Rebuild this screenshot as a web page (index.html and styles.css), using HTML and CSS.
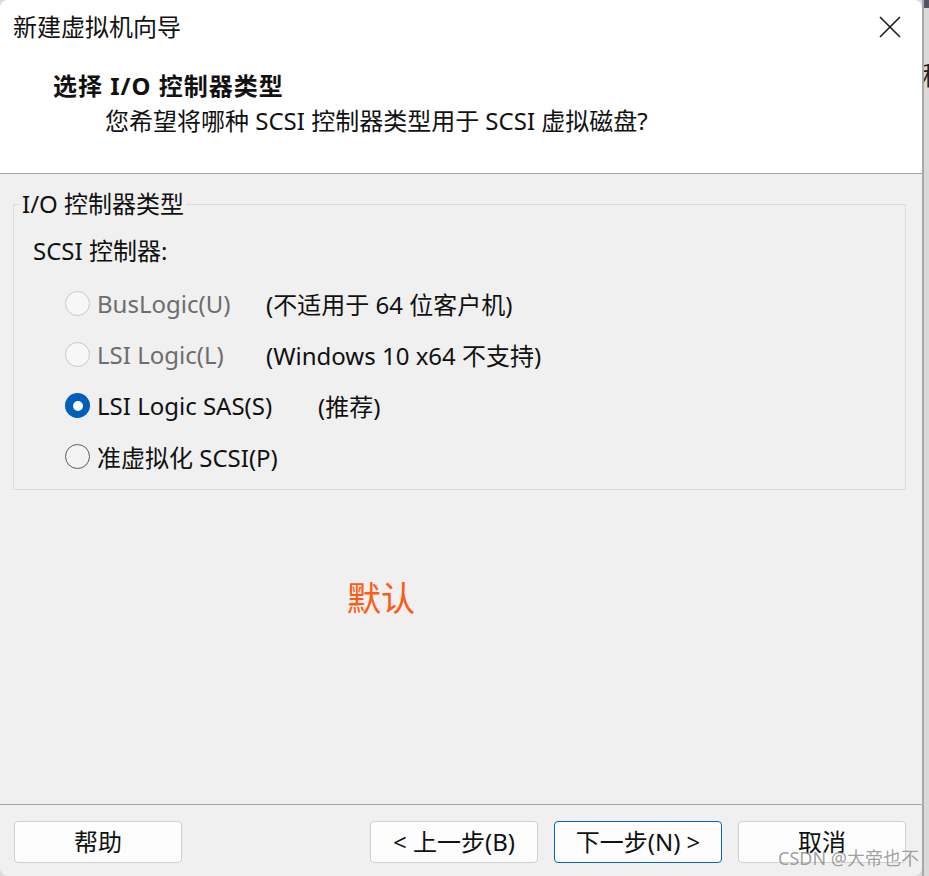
FILE: index.html
```html
<!DOCTYPE html>
<html lang="zh-CN">
<head>
<meta charset="utf-8">
<title>新建虚拟机向导</title>
<link rel="stylesheet" href="styles.css">
</head>
<body>
<div class="desktop">
  <div class="window">
    <div class="header">
      <div class="titlebar">
        <div class="title">新建虚拟机向导</div>
        <svg class="close" width="22" height="22" viewBox="0 0 22 22"><path d="M1 1 L21 21 M21 1 L1 21" stroke="#1a1a1a" stroke-width="1.6" fill="none"/></svg>
      </div>
      <div class="heading">选择 I/O 控制器类型</div>
      <div class="subtitle">您希望将哪种 SCSI 控制器类型用于 SCSI 虚拟磁盘?</div>
    </div>
    <div class="content">
      <fieldset class="group">
        <legend class="group-label">I/O 控制器类型</legend>
        <div class="group-caption">SCSI 控制器:</div>
        <div class="row disabled">
          <span class="radio"></span>
          <span class="label">BusLogic(U)</span>
          <span class="note">(不适用于 64 位客户机)</span>
        </div>
        <div class="row disabled">
          <span class="radio"></span>
          <span class="label">LSI Logic(L)</span>
          <span class="note">(Windows 10 x64 不支持)</span>
        </div>
        <div class="row">
          <span class="radio checked"></span>
          <span class="label wide">LSI Logic SAS(S)</span>
          <span class="note">(推荐)</span>
        </div>
        <div class="row">
          <span class="radio"></span>
          <span class="label">准虚拟化 SCSI(P)</span>
        </div>
      </fieldset>
      <div class="annotation">默认</div>
    </div>
    <div class="footer">
      <button class="btn">帮助</button>
      <div class="spacer"></div>
      <button class="btn">&lt; 上一步(B)</button>
      <button class="btn primary">下一步(N) &gt;</button>
      <button class="btn">取消</button>
    </div>
    <div class="watermark">CSDN @大帝也不</div>
  </div>
  <div class="behind">
    <div class="behind-top"></div>
    <div class="behind-char">种</div>
  </div>
</div>
</body>
</html>
```
FILE: styles.css
```css
html, body {
  margin: 0;
  padding: 0;
}
body {
  width: 929px;
  height: 876px;
  overflow: hidden;
  background: #d9d9d9;
  font-family: "Noto Sans", "Noto Sans CJK SC", sans-serif;
  color: #111;
}
.desktop {
  display: flex;
  height: 876px;
}
.window {
  position: relative;
  width: 922px;
  height: 876px;
  flex: none;
  display: flex;
  flex-direction: column;
  background: #f0f0f0;
  border-radius: 8px;
  overflow: hidden;
}
.header {
  background: #fff;
  height: 174px;
  box-sizing: border-box;
  border-bottom: 1px solid #a6a6a6;
  flex: none;
}
.titlebar {
  display: flex;
  justify-content: space-between;
  align-items: center;
  height: 54px;
  padding: 0 21px 0 13px;
}
.title {
  font-size: 24px;
  line-height: 32px;
}
.close {
  display: block;
}
.heading {
  margin: 17px 0 0 53px;
  font-size: 24px;
  line-height: 30px;
  font-weight: bold;
  letter-spacing: 1px;
}
.subtitle {
  margin: 5px 0 0 105px;
  font-size: 24px;
  line-height: 30px;
}
.content {
  flex: 1;
  display: flex;
  flex-direction: column;
}
.group {
  margin: 15px 16px 0 13px;
  padding: 0 6px 7px 6px;
  border: 1px solid #dcdcdc;
  min-width: 0;
}
.group-label {
  padding: 0 2px;
  font-size: 24px;
  line-height: 30px;
}
.group-caption {
  margin: 17px 0 0 13px;
  font-size: 24px;
  line-height: 30px;
}
.group-caption + .row {
  margin-top: 12px;
}
.row {
  display: flex;
  align-items: center;
  height: 51px;
  padding-left: 45px;
  font-size: 24px;
}
.radio {
  width: 25px;
  height: 25px;
  box-sizing: border-box;
  border-radius: 50%;
  border: 1px solid #5c5c5c;
  background: #f3f3f3;
  flex: none;
  position: relative;
}
.radio.checked {
  border: none;
  background: #005fb8;
}
.radio.checked::after {
  content: "";
  position: absolute;
  left: 7.5px;
  top: 7.5px;
  width: 10px;
  height: 10px;
  border-radius: 50%;
  background: #fff;
}
.row.disabled .radio {
  border-color: #c9c9c9;
  background: #f7f7f7;
}
.label {
  margin-left: 7px;
  width: 169px;
  white-space: nowrap;
}
.label.wide {
  width: 221px;
}
.row.disabled .label {
  color: #6d6d6d;
}
.note {
  color: #111;
  white-space: nowrap;
}
.annotation {
  margin: 86px 0 0 347px;
  font-size: 34px;
  line-height: 44px;
  color: #ff5a14;
}
.footer {
  flex: none;
  height: 72px;
  box-sizing: border-box;
  border-top: 1px solid #a6a6a6;
  display: flex;
  align-items: flex-start;
  gap: 16px;
  padding: 16px 16px 0 14px;
}
.spacer {
  flex: 1;
}
.btn {
  width: 168px;
  height: 42px;
  box-sizing: border-box;
  border: 1px solid #d0d0d0;
  border-radius: 4px;
  background: #fdfdfd;
  font-family: "Noto Sans", "Noto Sans CJK SC", sans-serif;
  font-size: 24px;
  color: #111;
  padding: 0;
  line-height: 40px;
}
.btn.primary {
  border-color: #0067c0;
}
.watermark {
  position: absolute;
  left: 778px;
  top: 845px;
  font-size: 18px;
  line-height: 26px;
  color: rgba(130, 130, 130, 0.75);
  white-space: nowrap;
  pointer-events: none;
}
.behind {
  flex: 1;
  border-left: 2px solid #a9a9a9;
  background: #dadada;
  overflow: hidden;
  position: relative;
}
.behind-top {
  height: 8px;
  background: #4d5563;
}
.behind-char {
  margin: 52px 0 0 -2px;
  font-size: 26px;
  line-height: 30px;
  color: #222;
  white-space: nowrap;
}
```
